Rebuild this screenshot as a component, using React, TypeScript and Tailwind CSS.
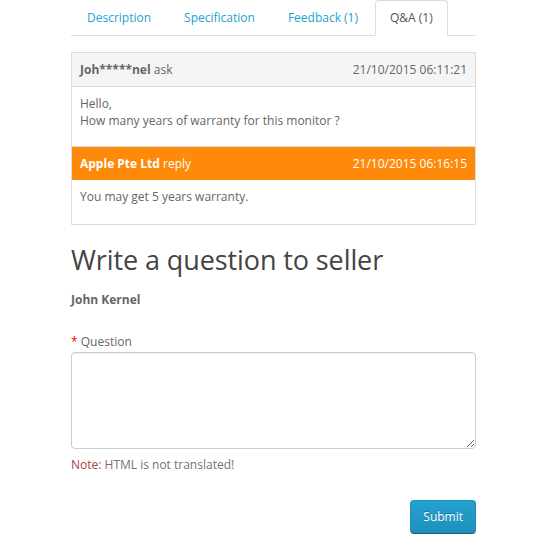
const tabs = [
    { label: "Description", active: false },
    { label: "Specification", active: false },
    { label: "Feedback (1)", active: false },
    { label: "Q&A (1)", active: true },
];

const Tabs = () => (
    <ul className="flex border-b border-[#ddd]">
        {tabs.map((tab) => (
            <li key={tab.label} className="-mb-px mr-[1px]">
                <a
                    href="#"
                    className={
                        tab.active
                            ? "block rounded-t-[4px] border border-[#ddd] border-b-white bg-white px-[14px] pt-[8px] pb-[9px] leading-[17px] text-[#555]"
                            : "block border border-transparent px-[15px] pt-[8px] pb-[9px] leading-[17px] text-[#23a1d1]"
                    }
                >
                    {tab.label}
                </a>
            </li>
        ))}
    </ul>
);

const Thread = () => (
    <div className="mt-[16px] border border-[#ddd]">
        <div className="flex justify-between border-b border-[#ddd] bg-[#f5f5f5] px-2 py-2 leading-[17px]">
            <span>
                <b>Joh*****nel</b> ask
            </span>
            <span>21/10/2015 06:11:21</span>
        </div>
        <div className="border-b border-[#ddd] px-2 pt-2 pb-[17px] leading-[17px]">
            Hello,
            <br />
            How many years of warranty for this monitor ?
        </div>
        <div className="flex justify-between bg-[#ff8a0a] px-2 py-2 leading-[17px] text-white">
            <span>
                <b>Apple Pte Ltd</b> reply
            </span>
            <span>21/10/2015 06:16:15</span>
        </div>
        <div className="px-2 pt-2 pb-[19px] leading-[17px]">
            You may get 5 years warranty.
        </div>
    </div>
);

const QuestionForm = () => (
    <div>
        <h2 className="mt-[20px] mb-[10px] text-[27px] leading-[1.1] tracking-[-0.1px] text-[#444]">
            Write a question to seller
        </h2>
        <div className="mt-[16px] font-bold leading-[17px]">John Kernel</div>
        <label className="mt-[25px] mb-[2px] block leading-[17px]">
            <span className="text-[#f00]">* </span>Question
        </label>
        <textarea className="block h-[97px] w-full rounded-[4px] border border-[#ccc] px-3 py-[6px] shadow-[inset_0_1px_1px_rgba(0,0,0,0.075)] outline-none" />
        <div className="mt-[7px] leading-[17px] text-[#737373]">
            <span className="text-[#a94442]">Note:</span> HTML is not translated!
        </div>
        <div className="mt-[27px] flex justify-end">
            <button className="rounded-[4px] border border-[#1f90bb] border-b-[#145e7a] bg-gradient-to-b from-[#23a1d1] to-[#1f90bb] px-[12px] py-[7.5px] leading-[17px] text-white [text-shadow:0_-1px_0_rgba(0,0,0,0.25)]">
                Submit
            </button>
        </div>
    </div>
);

export default function App() {
    return (
        <div className="min-h-[550px] bg-white font-['Open_Sans',sans-serif] text-[12px] text-[#666]">
            <div className="ml-[71px] w-[405px]">
                <Tabs />
                <Thread />
                <QuestionForm />
            </div>
        </div>
    );
}
